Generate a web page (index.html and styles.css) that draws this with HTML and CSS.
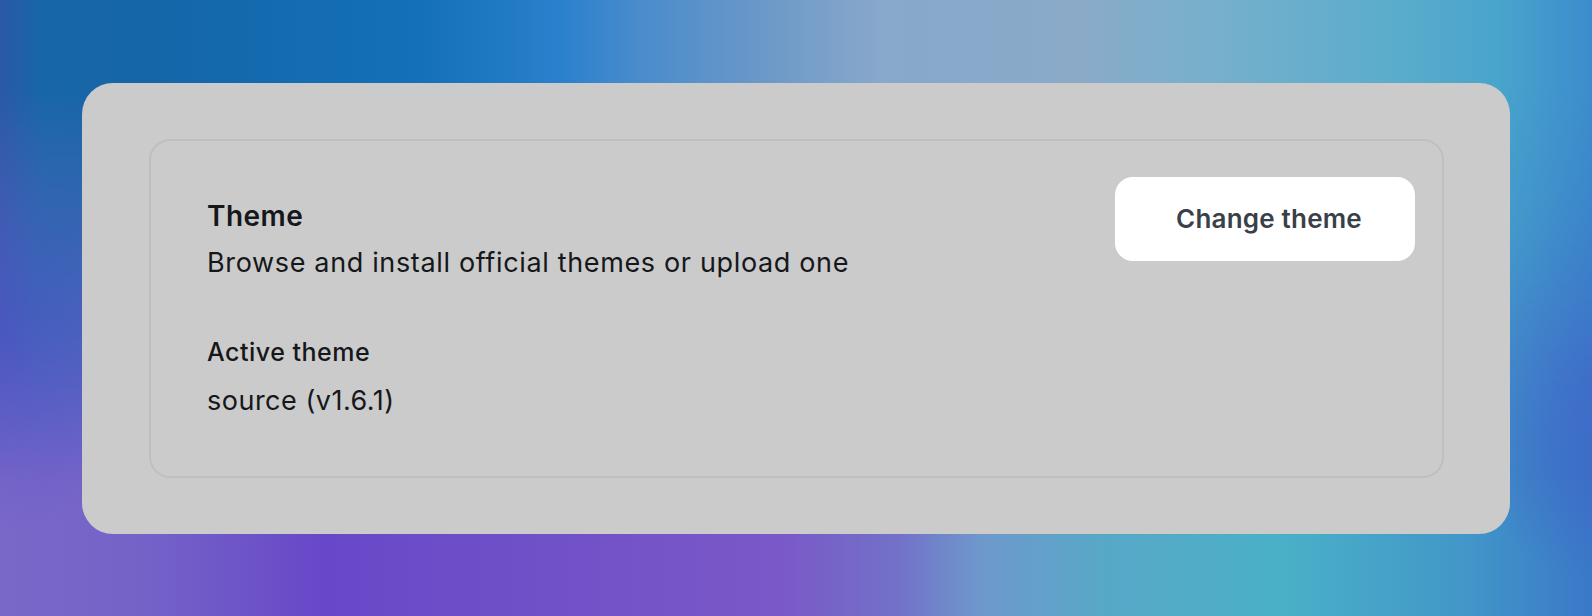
FILE: index.html
```html
<!DOCTYPE html>
<html lang="en">
<head>
<meta charset="utf-8">
<title>Theme settings</title>
<link rel="stylesheet" href="styles.css">
</head>
<body>
<main class="card">
  <section class="panel">
    <div class="info">
      <h2 class="title">Theme</h2>
      <p class="desc">Browse and install official themes or upload one</p>
      <h3 class="label">Active theme</h3>
      <p class="value">source (v1.6.1)</p>
    </div>
    <button class="btn" type="button">Change theme</button>
  </section>
</main>
</body>
</html>
```

FILE: styles.css
```css
* { box-sizing: border-box; }

html, body {
  margin: 0;
  height: 616px;
  overflow: hidden;
}

body {
  position: relative;
  display: flex;
  align-items: center;
  justify-content: center;
  font-family: Inter, "Noto Sans", sans-serif;
  color: #15171a;
  background:
    radial-gradient(ellipse 160px 200px at 0px 330px, rgba(88,84,206,0.85), rgba(88,84,206,0) 100%),
    radial-gradient(ellipse 140px 200px at 1592px 380px, rgba(64,98,200,0.9), rgba(64,98,200,0) 100%),
    linear-gradient(to right, #7a68c8 0px, #7462c8 150px, #6848c8 320px, #7050c8 520px, #7a58c8 780px, #7272c8 900px, #6e98cc 980px, #58a8c8 1100px, #4ab0c8 1280px, #4298c8 1460px, #3a78c8 1592px);
}

body::before {
  content: "";
  position: absolute;
  inset: 0;
  z-index: 0;
  background: linear-gradient(to right, #2a58a8 0px, #1866a8 40px, #1466a8 150px, #1470b8 420px, #2a80cc 560px, #4a8ccc 640px, #6a98c8 760px, #88a8cc 880px, #8aaac8 1080px, #78b0cc 1200px, #5aaccc 1400px, #48a4cc 1500px, #3c8ccc 1592px);
  -webkit-mask-image: linear-gradient(to bottom, #000 0px, #000 90px, rgba(0,0,0,0.5) 280px, transparent 480px);
  mask-image: linear-gradient(to bottom, #000 0px, #000 90px, rgba(0,0,0,0.5) 280px, transparent 480px);
}

.card {
  position: relative;
  z-index: 1;
  width: 1428px;
  height: 451px;
  padding: 56px 66px 56px 67px;
  background: #cbcbcb;
  border-radius: 31px;
}

.panel {
  display: flex;
  justify-content: space-between;
  align-items: flex-start;
  height: 339px;
  padding: 36px 27px 0 56px;
  border: 2px solid #bcbfc3;
  border-radius: 21px;
}

.info {
  padding-top: 21px;
}

.title {
  margin: 0;
  font-size: 28px;
  line-height: 36px;
  font-weight: 600;
  letter-spacing: 0.45px;
  color: #15171a;
}

.desc {
  margin: 11px 0 0;
  font-size: 27px;
  line-height: 36px;
  font-weight: 400;
  letter-spacing: 0.65px;
  color: #15171a;
}

.label {
  margin: 53px 0 0;
  font-size: 25px;
  line-height: 36px;
  font-weight: 500;
  letter-spacing: 0.5px;
  color: #15171a;
}

.value {
  margin: 13px 0 0;
  font-size: 27px;
  line-height: 36px;
  font-weight: 400;
  letter-spacing: 0.5px;
  color: #15171a;
}

.btn {
  width: 300px;
  height: 84px;
  border: none;
  border-radius: 18px;
  background: #ffffff;
  font-family: Inter, "Noto Sans", sans-serif;
  font-size: 26px;
  font-weight: 600;
  letter-spacing: 0.2px;
  color: #394047;
  padding: 0 0 0 8px;
  cursor: pointer;
}
```
